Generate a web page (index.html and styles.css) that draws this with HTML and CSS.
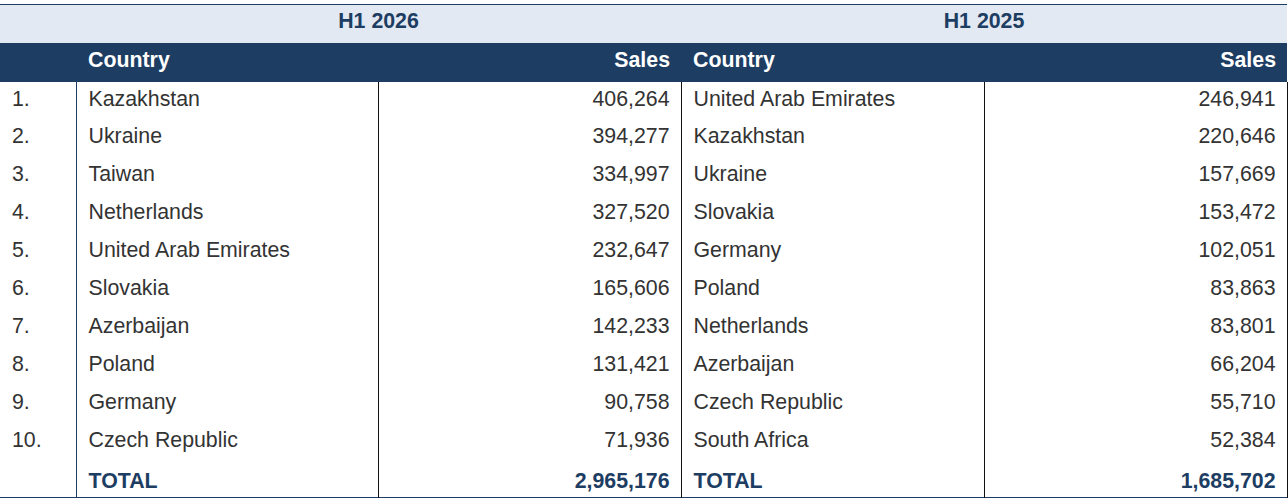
FILE: index.html
```html
<!DOCTYPE html>
<html lang="en">
<head>
<meta charset="utf-8">
<title>Top 10 countries by sales</title>
<link rel="stylesheet" href="styles.css">
</head>
<body>
<table class="sales">
  <colgroup>
    <col class="c-rank">
    <col class="c-country">
    <col class="c-sales">
    <col class="c-country2">
    <col class="c-sales-last">
  </colgroup>
  <thead>
    <tr class="period">
      <th></th>
      <th colspan="2">H1 2026</th>
      <th colspan="2">H1 2025</th>
    </tr>
    <tr class="cols">
      <th></th>
      <th class="txt">Country</th>
      <th class="num">Sales</th>
      <th class="txt">Country</th>
      <th class="num">Sales</th>
    </tr>
  </thead>
  <tbody>
    <tr class="row"><td class="rank">1.</td><td class="country">Kazakhstan</td><td class="num">406,264</td><td class="country">United Arab Emirates</td><td class="num last">246,941</td></tr>
    <tr class="row"><td class="rank">2.</td><td class="country">Ukraine</td><td class="num">394,277</td><td class="country">Kazakhstan</td><td class="num last">220,646</td></tr>
    <tr class="row"><td class="rank">3.</td><td class="country">Taiwan</td><td class="num">334,997</td><td class="country">Ukraine</td><td class="num last">157,669</td></tr>
    <tr class="row"><td class="rank">4.</td><td class="country">Netherlands</td><td class="num">327,520</td><td class="country">Slovakia</td><td class="num last">153,472</td></tr>
    <tr class="row"><td class="rank">5.</td><td class="country">United Arab Emirates</td><td class="num">232,647</td><td class="country">Germany</td><td class="num last">102,051</td></tr>
    <tr class="row"><td class="rank">6.</td><td class="country">Slovakia</td><td class="num">165,606</td><td class="country">Poland</td><td class="num last">83,863</td></tr>
    <tr class="row"><td class="rank">7.</td><td class="country">Azerbaijan</td><td class="num">142,233</td><td class="country">Netherlands</td><td class="num last">83,801</td></tr>
    <tr class="row"><td class="rank">8.</td><td class="country">Poland</td><td class="num">131,421</td><td class="country">Azerbaijan</td><td class="num last">66,204</td></tr>
    <tr class="row"><td class="rank">9.</td><td class="country">Germany</td><td class="num">90,758</td><td class="country">Czech Republic</td><td class="num last">55,710</td></tr>
    <tr class="row"><td class="rank">10.</td><td class="country">Czech Republic</td><td class="num">71,936</td><td class="country">South Africa</td><td class="num last">52,384</td></tr>
    <tr class="total"><td class="rank"></td><td class="country">TOTAL</td><td class="num">2,965,176</td><td class="country">TOTAL</td><td class="num last">1,685,702</td></tr>
  </tbody>
</table>
</body>
</html>
```

FILE: styles.css
```css
html, body {
  margin: 0;
  padding: 0;
  background: #ffffff;
}

.sales {
  border-collapse: collapse;
  table-layout: fixed;
  width: 1287px;
  margin-top: 4px;
  font-family: "Liberation Sans", Arial, sans-serif;
  font-size: 21.33px;
  line-height: 24px;
  color: #333333;
  border-top: 1px solid #1d3d63;
}

.c-rank { width: 76px; }
.c-country { width: 302px; }
.c-sales { width: 303px; }
.c-country2 { width: 303px; }
.c-sales-last { width: 303px; }

.sales th,
.sales td {
  vertical-align: top;
  padding: 0 12px;
  white-space: nowrap;
}

.sales .num {
  padding-right: 11px;
}

.period th {
  background: #e3e9f2;
  color: #1d3d63;
  font-weight: bold;
  text-align: center;
  height: 38px;
  padding-top: 4px;
  box-sizing: border-box;
}

.cols th {
  background: #1d3d63;
  color: #ffffff;
  font-weight: bold;
  height: 39px;
  padding-top: 5px;
  box-sizing: border-box;
}

.txt { text-align: left; }
.num { text-align: right; }

.row {
  height: 37.9px;
}

.row td {
  padding-top: 5px;
}

.rank {
  border-right: 1px solid #1d3d63;
}

.country {
  border-right: 1px solid #111111;
}

td.num {
  border-right: 1px solid #111111;
}

.total {
  height: 37px;
  border-bottom: 1px solid #1d3d63;
}

.total td {
  padding-top: 9px;
  color: #1d3d63;
  font-weight: bold;
}
```
